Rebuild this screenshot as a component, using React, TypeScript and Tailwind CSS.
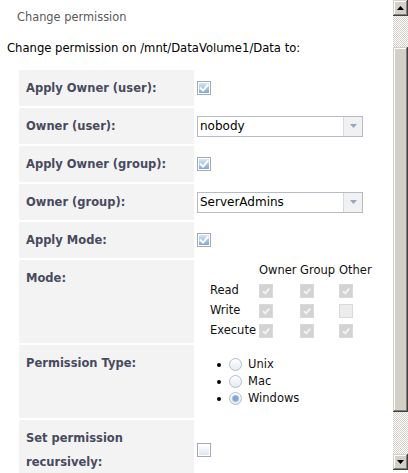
import React from 'react'

function Check({ checked = true }: { checked?: boolean }) {
  return (
    <svg width="14" height="14" viewBox="0 0 14 14" className="block shrink-0">
      <defs>
        <linearGradient id={checked ? 'cbOn' : 'cbOff'} x1="0" y1="0" x2="0" y2="1">
          <stop offset="0" stopColor={checked ? '#d6e5f6' : '#ffffff'} />
          <stop offset="1" stopColor={checked ? '#7fa8d6' : '#dde6f2'} />
        </linearGradient>
      </defs>
      <rect x="0.5" y="0.5" width="13" height="13" fill="#fff" stroke="#a3aab5" />
      <rect x="2" y="2" width="10" height="10" fill={`url(#${checked ? 'cbOn' : 'cbOff'})`} />
      {checked && (
        <path d="M3.6 7.2 L6 9.6 L10.6 4.2" fill="none" stroke="#fff" strokeWidth="2" strokeLinecap="square" />
      )}
    </svg>
  )
}

function GrayCheck({ checked = true }: { checked?: boolean }) {
  return (
    <svg width="14" height="14" viewBox="0 0 14 14" className="block">
      <rect x="0.5" y="0.5" width="13" height="13" fill={checked ? '#d3d3d3' : '#ececec'} stroke="#d9d9d9" />
      {checked && (
        <path d="M4 7.2 L6.2 9.4 L10.2 4.6" fill="none" stroke="#f4f4f4" strokeWidth="1.8" />
      )}
    </svg>
  )
}

function Radio({ on = false }: { on?: boolean }) {
  return (
    <svg width="13" height="13" viewBox="0 0 13 13" className="block shrink-0">
      <defs>
        <linearGradient id="rdBg" x1="0" y1="0" x2="0" y2="1">
          <stop offset="0" stopColor="#ffffff" />
          <stop offset="1" stopColor="#e4eaf2" />
        </linearGradient>
      </defs>
      <circle cx="6.5" cy="6.5" r="6" fill="url(#rdBg)" stroke="#b4bcc8" />
      {on && <circle cx="6.5" cy="6.5" r="3.2" fill="#7ea7d2" stroke="#a9c4e2" strokeWidth="0.8" />}
    </svg>
  )
}

function Select({ value }: { value: string }) {
  return (
    <div className="flex h-[21px] w-[166px] border border-[#b6bbc8] bg-white">
      <div className="flex-1 pl-[2px] text-[12px] leading-[19px] text-black">{value}</div>
      <div className="flex w-[19px] items-center justify-center border-l border-[#d6d9e0] bg-[#f1f1f1]">
        <svg width="7" height="4" viewBox="0 0 7 4">
          <path d="M0 0 H7 L3.5 4 Z" fill="#97a6c2" />
        </svg>
      </div>
    </div>
  )
}

function Label({ children }: { children: React.ReactNode }) {
  return (
    <div className="bg-[#f3f3f3] px-[7px] py-[6px] text-[11.5px] font-bold leading-[24px] text-[#484a5e]">
      {children}
    </div>
  )
}

function Scrollbar() {
  const btn =
    'flex h-[16px] items-center justify-center bg-[#d4d0c8] shadow-[inset_-1px_-1px_#404040,inset_1px_1px_#d4d0c8,inset_-2px_-2px_#808080,inset_2px_2px_#ffffff]'
  const track = 'bg-[repeating-conic-gradient(#d4d0c8_0_25%,#ffffff_0_50%)] bg-[length:2px_2px]'
  return (
    <div className="flex h-[473px] w-[15px] shrink-0 flex-col">
      <div className={btn}>
        <svg width="7" height="4" viewBox="0 0 7 4">
          <path d="M3.5 0 L7 4 H0 Z" fill="#000" />
        </svg>
      </div>
      <div className={`h-[31px] ${track}`} />
      <div className="h-[365px] bg-[#d4d0c8] shadow-[inset_-1px_-1px_#404040,inset_1px_1px_#d4d0c8,inset_-2px_-2px_#808080,inset_2px_2px_#ffffff]" />
      <div className={`h-[42px] ${track}`} />
      <div className={btn}>
        <svg width="7" height="4" viewBox="0 0 7 4">
          <path d="M0 0 H7 L3.5 4 Z" fill="#000" />
        </svg>
      </div>
      <div className="flex-1 bg-white" />
    </div>
  )
}

export default function App() {
  const modeRows: { name: string; vals: boolean[] }[] = [
    { name: 'Read', vals: [true, true, true] },
    { name: 'Write', vals: [true, true, false] },
    { name: 'Execute', vals: [true, true, true] },
  ]

  return (
    <div className="flex h-[473px] w-[408px] overflow-hidden bg-white font-['DejaVu_Sans','Liberation_Sans',sans-serif]">
      <div className="min-w-0 flex-1">
        <div className="pl-[17px] pt-[9px] text-[11.4px] leading-[16px] text-[#5a5a5a]">Change permission</div>
        <div className="mt-[15px] pl-[7px] text-[11.6px] leading-[16px] text-black">
          Change permission on /mnt/DataVolume1/Data to:
        </div>

        <div className="ml-[19px] mt-[14px] grid grid-cols-[175px_1fr] gap-[2px]">
          <Label>Apply Owner (user):</Label>
          <div className="flex items-center pl-[1px]">
            <Check />
          </div>

          <Label>Owner (user):</Label>
          <div className="flex items-center pl-[1px]">
            <Select value="nobody" />
          </div>

          <Label>Apply Owner (group):</Label>
          <div className="flex items-center pl-[1px]">
            <Check />
          </div>

          <Label>Owner (group):</Label>
          <div className="flex items-center pl-[1px]">
            <Select value="ServerAdmins" />
          </div>

          <Label>Apply Mode:</Label>
          <div className="flex items-center pl-[1px]">
            <Check />
          </div>

          <Label>Mode:</Label>
          <div className="pb-[2px] pl-[14px] pt-[1px] text-[11.5px] text-[#111]">
            <div className="grid grid-cols-[49px_41px_39px_auto] auto-rows-[20px] items-center">
              <div />
              <div>Owner</div>
              <div>Group</div>
              <div>Other</div>
              {modeRows.map((r) => (
                <React.Fragment key={r.name}>
                  <div>{r.name}</div>
                  {r.vals.map((v, i) => (
                    <div key={i}>
                      <GrayCheck checked={v} />
                    </div>
                  ))}
                </React.Fragment>
              ))}
            </div>
          </div>

          <Label>Permission Type:</Label>
          <div className="py-[11px] text-[11.5px] text-[#111]">
            {['Unix', 'Mac', 'Windows'].map((t) => (
              <div key={t} className="flex h-[17px] items-center">
                <span className="ml-[21px] h-[4px] w-[4px] rounded-full bg-black" />
                <span className="ml-[8px]">
                  <Radio on={t === 'Windows'} />
                </span>
                <span className="ml-[6px]">{t}</span>
              </div>
            ))}
          </div>

          <Label>
            Set permission
            <br />
            recursively:
          </Label>
          <div className="flex items-center pl-[1px]">
            <Check checked={false} />
          </div>
        </div>
      </div>
      <Scrollbar />
    </div>
  )
}
